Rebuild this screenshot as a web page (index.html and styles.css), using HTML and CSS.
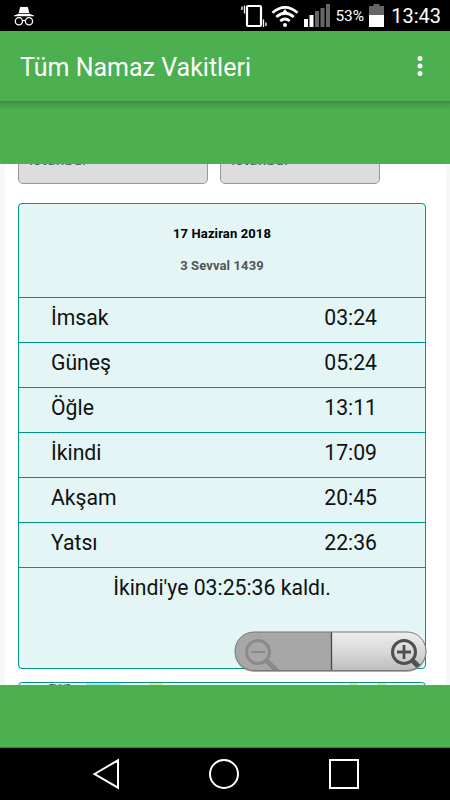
FILE: index.html
```
<!DOCTYPE html>
<html lang="tr">
<head>
<meta charset="utf-8">
<title>Tüm Namaz Vakitleri</title>
<link rel="stylesheet" href="styles.css">
</head>
<body>
<div class="phone">
  <div class="status">
    <svg class="incognito" width="22" height="21" viewBox="0 0 22 21"><path fill="#fff" d="M7 1.500Q8 .3 9.500 1h3Q14 .3 15 1.500l1.300 5.500H5.700zM1 9.500Q3 8.800 5.500 7.700h11Q19 8.800 21 9.500v.7H1z"/><g fill="none" stroke="#fff" stroke-width="1.300"><circle cx="5.900" cy="15.200" r="3.600"/><circle cx="16" cy="15.200" r="3.600"/><path d="M9.500 14.800q1.500-.8 3 0"/></g></svg>
    <svg class="vibrate" width="26" height="24" viewBox="0 0 26 24"><g fill="none" stroke="#fff"><rect x="6" y="2" width="14" height="20" rx="1" stroke-width="2.200"/><path d="M3.500 1.500v8M1 2.500v3.500M22.500 15.500v7.500M25 18.500v3.500" stroke-width="1.300"/></g></svg>
    <svg class="wifi" width="28" height="24" viewBox="0 0 28 24"><g fill="none" stroke="#fff" stroke-width="2.700"><path d="M1.500 8.800Q14-2 26.500 8.800M5.300 13Q14 5.500 22.700 13M9.200 17Q14 13 18.800 17"/></g><path fill="#fff" d="M14 5l3 4h-6z"/><circle cx="14" cy="21" r="2" fill="#fff"/></svg>
    <svg class="signal" width="27" height="24" viewBox="0 0 27 24"><path fill="#fff" d="M1 15h4v8H1zM6.500 11h4v12h-4z"/><path fill="#666" d="M12 7h4v16h-4zM17.500 4h4v19h-4zM23 0h4v23h-4z"/></svg>
    <span class="percent">53%</span>
    <svg class="battery" width="15" height="24" viewBox="0 0 15 24"><path fill="#666" d="M4.500 0h6v2H15v9H0V2h4.500z"/><path fill="#fff" d="M0 11h15v12H0z"/></svg>
    <span class="clock">13:43</span>
  </div>
  <header class="appbar">
    <h1>Tüm Namaz Vakitleri</h1>
    <svg width="6" height="20" viewBox="0 0 6 20" fill="#fff"><circle cx="3" cy="2.500" r="2.500"/><circle cx="3" cy="10" r="2.500"/><circle cx="3" cy="17.500" r="2.500"/></svg>
  </header>
  <div class="strip"></div>
  <main class="viewport">
    <div class="page">
      <div class="selects">
        <div class="select city">İstanbul</div>
        <div class="select town">İstanbul</div>
      </div>
      <section class="card">
        <div class="dates"><p class="date">17 Haziran 2018</p><p class="hijri">3 Sevval 1439</p></div>
        <div class="row"><span>İmsak</span><span class="time">03:24</span></div>
        <div class="row"><span>Güneş</span><span class="time">05:24</span></div>
        <div class="row"><span>Öğle</span><span class="time">13:11</span></div>
        <div class="row"><span>İkindi</span><span class="time">17:09</span></div>
        <div class="row"><span>Akşam</span><span class="time">20:45</span></div>
        <div class="row"><span>Yatsı</span><span class="time">22:36</span></div>
        <div class="remaining">İkindi'ye 03:25:36 kaldı.</div>
      </section>
      <section class="next"><span class="map-label">TYKP</span><i class="patch blue"></i><i class="patch yellow"></i><i class="patch lime"></i><i class="patch lime two"></i></section>
    </div>
    <div class="zoom">
      <svg width="194" height="42" viewBox="0 0 194 42">
        <defs>
          <linearGradient id="light" x2="0" y2="1"><stop stop-color="#f0f0f0"/><stop offset=".5" stop-color="#d8d8d8"/><stop offset="1" stop-color="#b9b9b9"/></linearGradient>
          <clipPath id="pill"><rect x="1" y="1" width="191" height="38" rx="19"/></clipPath>
        </defs>
        <rect x="1" y="2" width="191" height="39" rx="19" fill="#777" opacity=".6"/>
        <g clip-path="url(#pill)">
          <path fill="#a7a7a7" d="M0 0h97v42H0z"/><path fill="url(#light)" d="M97 0h97v42H97z"/><path stroke="#484848" stroke-width="1.300" d="M97.500 0v42"/>
          <g fill="none" stroke="#8a8a8a"><circle cx="24" cy="21" r="11.500" stroke-width="3"/><path d="M17 21h14" stroke-width="2"/><path d="M32 29l13 13" stroke-width="5"/></g>
          <g fill="none" stroke="#505050"><circle cx="170" cy="21" r="11.500" stroke-width="3"/><path d="M163 21h14M170 14v14" stroke-width="2.800"/><path d="M178 29l13 13" stroke-width="5"/></g>
        </g>
        <rect x="1" y="1" width="191" height="38.500" rx="19" fill="none" stroke="#777"/>
      </svg>
    </div>
  </main>
  <div class="bottom"></div>
  <nav class="nav">
    <svg width="28" height="32" viewBox="0 0 28 32"><path fill="none" stroke="#fff" stroke-width="2" d="M2.500 16L26 2.300v27.400z"/></svg>
    <svg width="32" height="32" viewBox="0 0 32 32"><circle cx="16" cy="16" r="14" fill="none" stroke="#fff" stroke-width="2"/></svg>
    <svg width="32" height="32" viewBox="0 0 32 32"><rect x="2" y="2" width="28" height="28" fill="none" stroke="#fff" stroke-width="2"/></svg>
  </nav>
</div>
</body>
</html>
```
FILE: styles.css
```
* { box-sizing: border-box; }
body { margin: 0; font-family: Roboto, "Liberation Sans", sans-serif; color: #111; background: #000; }
h1, p { margin: 0; }
svg { display: block; flex: none; }
.phone { width: 450px; height: 800px; display: flex; flex-direction: column; overflow: hidden; }
.status { height: 31px; flex: none; background: #000; color: #fff; display: flex; align-items: center; padding: 1px 9px 0 13px; }
.vibrate { margin-left: auto; }
.wifi { margin-left: 4px; }
.signal { margin-left: 4px; }
.percent { margin-left: 5px; font-size: 15.500px; line-height: 31px; }
.battery { margin-left: 5px; }
.clock { margin-left: 7px; font-size: 20px; line-height: 31px; }
.appbar { height: 70px; flex: none; background: #4caf50; color: #fff; display: flex; align-items: center; justify-content: space-between; padding: 0 27px 0 20px; }
.appbar h1 { font-size: 25px; font-weight: 400; line-height: 34px; padding-top: 3px; }
.strip { height: 63px; flex: none; background: linear-gradient(#3d8c40, #45a049 4px, #4caf50 9px); }
.viewport { height: 521px; flex: none; position: relative; overflow: hidden; background: #f7f7f7; padding: 0 4px 0 5px; display: flex; flex-direction: column; }
.page { background: #fff; padding: 0 20px 0 13px; height: 521px; flex: none; display: flex; flex-direction: column; }
.selects { display: flex; gap: 12px; height: 20px; flex: none; align-items: flex-end; }
.select { height: 40px; background: #ddd; border: 1px solid #999; border-radius: 5px; padding-left: 10px; font-size: 15px; line-height: 31px; color: #555; letter-spacing: .5px; }
.city { width: 190px; }
.town { width: 160px; }
.card { margin-top: 19px; height: 466px; flex: none; width: 408px; background: #e3f5f5; border: 1px solid #009688; border-radius: 4px; }
.dates { height: 93px; padding-top: 20px; text-align: center; font-size: 13px; line-height: 20px; font-weight: 700; color: #000; letter-spacing: .12px; }
.hijri { margin-top: 12px; color: #555; }
.row { height: 45px; border-top: 1px solid #009688; display: flex; justify-content: space-between; padding: 0 48px 0 32px; font-size: 21.200px; line-height: 40px; }
.remaining { border-top: 1px solid #009688; text-align: center; font-size: 21.200px; line-height: 40px; }
.next { margin-top: 13px; height: 60px; flex: none; width: 408px; border: 1px solid #009688; border-radius: 4px; background: #e8f7f2; position: relative; }
.map-label { position: absolute; left: 30px; top: 0; font-size: 9px; line-height: 11px; color: #456; }
.patch { position: absolute; top: 0; height: 3px; width: 34px; left: 67px; background: #a6e3ef; }
.yellow { left: 130px; width: 14px; background: #e3e89b; }
.lime { left: 330px; width: 9px; background: #d2ee8b; }
.two { left: 358px; }
.zoom { position: absolute; left: 234px; top: 467px; }
.bottom { height: 63px; flex: none; background: #4caf50; border-bottom: 1px solid #3c7d40; }
.nav { height: 52px; flex: none; background: #000; display: grid; grid-template-columns: 28px 32px 32px; column-gap: 87px; align-items: center; justify-content: start; padding-left: 92px; column-gap: 88px; }
```
